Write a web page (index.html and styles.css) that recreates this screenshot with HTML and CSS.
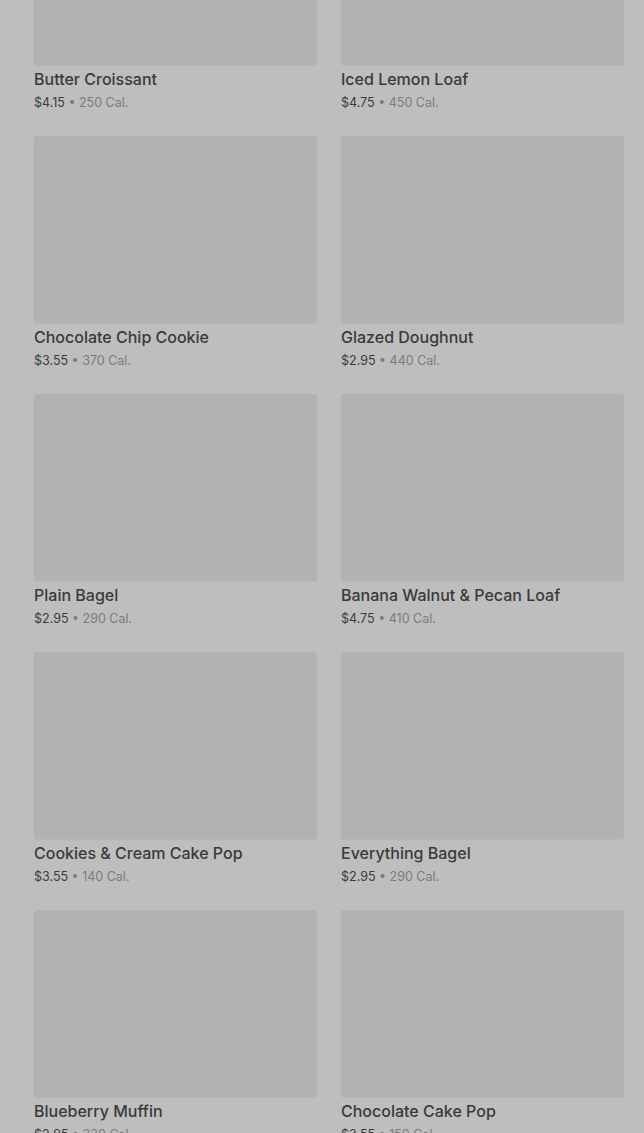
FILE: index.html
```html
<!DOCTYPE html>
<html lang="en">
<head>
  <meta charset="UTF-8" />
  <meta name="viewport" content="width=device-width, initial-scale=1.0"/>
  <title>Bakery | Menu</title>
  <link rel="stylesheet" href="styles.css">
</head>
<body>

  <div class="menu">
    <div class="item">
      <div class="photo"></div>
      <h3>Butter Croissant</h3>
      <p class="info">$4.15 <span>• 250 Cal.</span></p>
    </div>
    <div class="item">
      <div class="photo"></div>
      <h3>Iced Lemon Loaf</h3>
      <p class="info">$4.75 <span>• 450 Cal.</span></p>
    </div>
    <div class="item">
      <div class="photo"></div>
      <h3>Chocolate Chip Cookie</h3>
      <p class="info">$3.55 <span>• 370 Cal.</span></p>
    </div>
    <div class="item">
      <div class="photo"></div>
      <h3>Glazed Doughnut</h3>
      <p class="info">$2.95 <span>• 440 Cal.</span></p>
    </div>
    <div class="item">
      <div class="photo"></div>
      <h3>Plain Bagel</h3>
      <p class="info">$2.95 <span>• 290 Cal.</span></p>
    </div>
    <div class="item">
      <div class="photo"></div>
      <h3>Banana Walnut &amp; Pecan Loaf</h3>
      <p class="info">$4.75 <span>• 410 Cal.</span></p>
    </div>
    <div class="item">
      <div class="photo"></div>
      <h3>Cookies &amp; Cream Cake Pop</h3>
      <p class="info">$3.55 <span>• 140 Cal.</span></p>
    </div>
    <div class="item">
      <div class="photo"></div>
      <h3>Everything Bagel</h3>
      <p class="info">$2.95 <span>• 290 Cal.</span></p>
    </div>
    <div class="item">
      <div class="photo"></div>
      <h3>Blueberry Muffin</h3>
      <p class="info">$2.95 <span>• 330 Cal.</span></p>
    </div>
    <div class="item">
      <div class="photo"></div>
      <h3>Chocolate Cake Pop</h3>
      <p class="info">$3.55 <span>• 150 Cal.</span></p>
    </div>
  </div>

</body>
</html>
```

FILE: styles.css
```css
body {
  font-family: Inter, Roboto, 'Liberation Sans', sans-serif;
  margin: 0;
  padding: 0;
  background-color: #bebebe;
  overflow: hidden;
}

.menu {
  display: grid;
  grid-template-columns: 283px 283px;
  column-gap: 24px;
  row-gap: 21px;
  padding: 0 20px 0 34px;
  margin-top: -122px;
}

.photo {
  height: 187px;
  background-color: #b2b2b2;
  border-radius: 3px;
  box-shadow: 0 1px 2px rgba(0, 0, 0, 0.04);
}

.item h3 {
  margin: 4px 0 0;
  font-size: 16px;
  line-height: 20px;
  font-weight: 500;
  color: #3a3a3a;
}

.info {
  margin: 2px 0 0;
  font-size: 12.5px;
  line-height: 24px;
  color: #3c3c3c;
}

.info span {
  color: #7c7c7c;
}
```
